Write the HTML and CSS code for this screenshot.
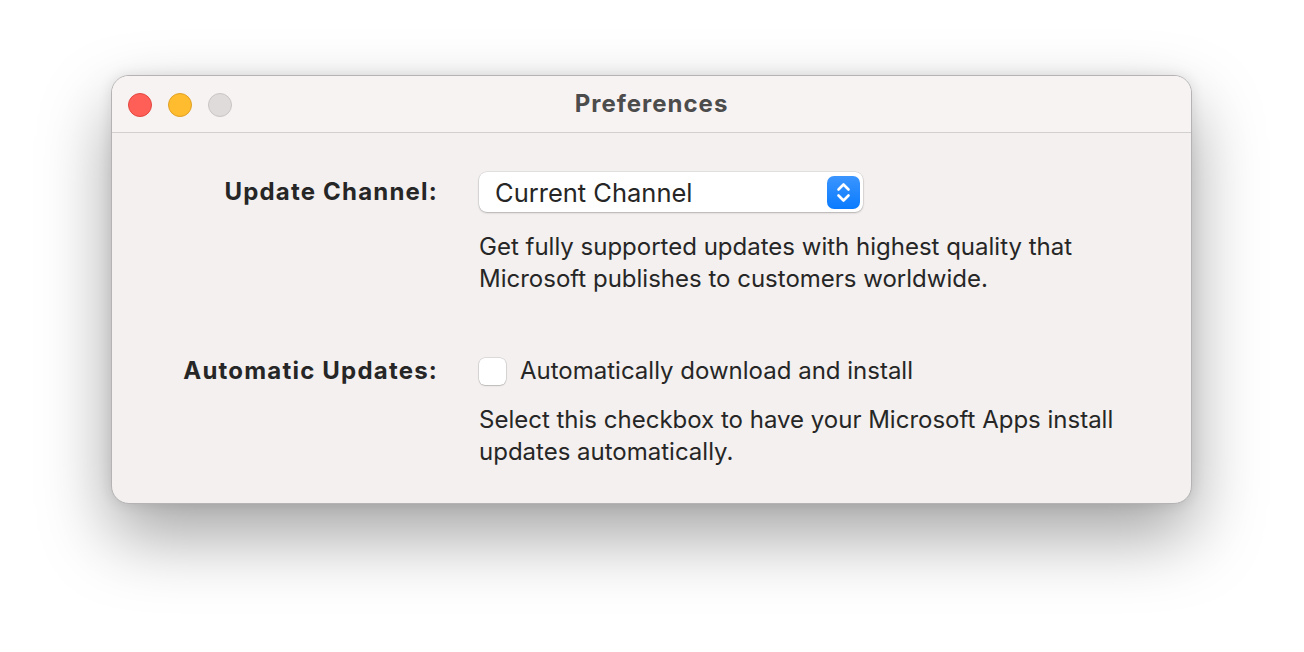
FILE: index.html
```html
<!DOCTYPE html>
<html>
<head>
<meta charset="utf-8">
<link rel="stylesheet" href="styles.css">
</head>
<body>
<div class="window">
  <div class="titlebar">
    <div class="lights">
      <span class="light red"></span>
      <span class="light yellow"></span>
      <span class="light gray"></span>
    </div>
    <div class="title">Preferences</div>
  </div>
  <div class="content">
    <div class="label">Update Channel:</div>
    <div class="control">
      <div class="select">
        <span class="select-text">Current Channel</span>
        <span class="stepper">
          <svg width="33" height="33" viewBox="0 0 33 33">
            <path d="M11.5 13.5 L16.5 8.5 L21.5 13.5" fill="none" stroke="#fff" stroke-width="2.6" stroke-linecap="round" stroke-linejoin="round"/>
            <path d="M11.5 19.5 L16.5 24.5 L21.5 19.5" fill="none" stroke="#fff" stroke-width="2.6" stroke-linecap="round" stroke-linejoin="round"/>
          </svg>
        </span>
      </div>
      <p class="desc">Get fully supported updates with highest quality that<br>Microsoft publishes to customers worldwide.</p>
    </div>
    <div class="label row2">Automatic Updates:</div>
    <div class="control row2ctl">
      <label class="check">
        <span class="box"></span>
        <span>Automatically download and install</span>
      </label>
      <p class="desc desc2">Select this checkbox to have your Microsoft Apps install<br>updates automatically.</p>
    </div>
  </div>
</div>
</body>
</html>
```
FILE: styles.css
```css
html, body {
  margin: 0;
  padding: 0;
  background: #ffffff;
}
body {
  font-family: Inter, "Noto Sans", sans-serif;
  color: #262626;
  padding-top: 75px;
  padding-left: 111px;
  min-height: 652px;
  box-sizing: border-box;
}
.window {
  width: 1081px;
  height: 429px;
  box-sizing: border-box;
  border-radius: 18px;
  background: #f3f0ef;
  border: 1px solid #b5b3b3;
  box-shadow: 0 32px 70px rgba(0,0,0,0.36), 0 0 14px rgba(0,0,0,0.10);
  overflow: hidden;
}
.titlebar {
  height: 56px;
  background: #f8f3f3;
  border-bottom: 1px solid #d2cfcf;
  display: flex;
  align-items: center;
  position: relative;
}
.lights {
  display: flex;
  gap: 16px;
  padding-left: 16px;
  padding-top: 2px;
}
.light {
  width: 24px;
  height: 24px;
  border-radius: 50%;
  box-sizing: border-box;
}
.red { background: #ff5f57; border: 1px solid #e2463f; }
.yellow { background: #febc2e; border: 1px solid #e0a025; }
.gray { background: #dedbda; border: 1px solid #c8c5c4; }
.title {
  position: absolute;
  left: 0;
  right: 0;
  top: 13px;
  text-align: center;
  font-weight: 700;
  font-size: 24px;
  letter-spacing: 1px;
  color: #4c4c4c;
}
.content {
  display: grid;
  grid-template-columns: 326px 1fr;
  column-gap: 41px;
  padding-top: 39px;
}
.label {
  text-align: right;
  font-weight: 700;
  font-size: 24px;
  letter-spacing: 1.2px;
  color: #262626;
  line-height: 40px;
}
.row2 {
  margin-top: 62px;
  line-height: 28px;
}
.control {
  display: flex;
  flex-direction: column;
}
.row2ctl {
  margin-top: 62px;
}
.select {
  width: 384px;
  height: 40px;
  box-sizing: border-box;
  background: #ffffff;
  border-radius: 8px;
  box-shadow: 0 0 0 0.5px rgba(0,0,0,0.12), 0 1px 2px rgba(0,0,0,0.22);
  display: flex;
  align-items: center;
  justify-content: space-between;
  padding-left: 16px;
  padding-right: 3px;
}
.select-text {
  font-size: 25.5px;
  color: #262626;
}
.stepper {
  width: 33px;
  height: 33px;
  border-radius: 7px;
  background: linear-gradient(#3b95ff, #0a7bff);
  display: block;
}
.stepper svg { display: block; }
.desc {
  margin: 19px 0 0 0;
  font-size: 24px;
  line-height: 32px;
  color: #262626;
}
.check {
  display: flex;
  align-items: center;
  gap: 14px;
  font-size: 24px;
  line-height: 28px;
}
.box {
  width: 27px;
  height: 27px;
  box-sizing: border-box;
  border-radius: 6px;
  background: #fff;
  box-shadow: 0 0 0 0.5px rgba(0,0,0,0.18), 0 1px 1.5px rgba(0,0,0,0.15);
}
.desc2 {
  margin-top: 19px;
}
```
